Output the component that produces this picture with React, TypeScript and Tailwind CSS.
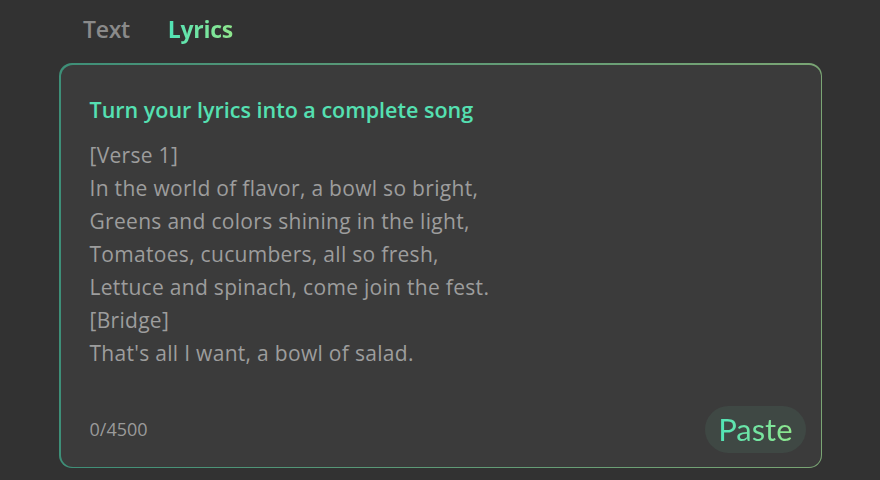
import React from "react";

const lyrics = [
  "[Verse 1]",
  "In the world of flavor, a bowl so bright,",
  "Greens and colors shining in the light,",
  "Tomatoes, cucumbers, all so fresh,",
  "Lettuce and spinach, come join the fest.",
  "[Bridge]",
  "That's all I want, a bowl of salad.",
];

export default function App() {
  return (
    <div
      className="w-[880px] h-[480px] bg-[#323232] overflow-hidden"
      style={{ fontFamily: '"Open Sans", "Noto Sans", sans-serif' }}
    >
      <div className="flex items-center gap-[38px] pl-[83px] pt-[9px] h-[50px]">
        <span className="text-[23px] font-semibold text-[#8a8a8a] tracking-[-0.3px]">Text</span>
        <span className="text-[23px] font-bold tracking-[-0.3px] bg-gradient-to-r from-[#4fe3b6] to-[#8ee68c] bg-clip-text text-transparent">
          Lyrics
        </span>
      </div>
      <div className="ml-[59px] mt-[13px] w-[763px] h-[405px] rounded-[13px] p-[1.5px] bg-gradient-to-r from-[#3e8f78] to-[#7aa574]">
        <div className="w-full h-full rounded-[12px] bg-[#3b3b3b] flex flex-col pl-[29px] pr-[15px]">
          <div className="pt-[30px] text-[21.5px] font-semibold text-[#55e0b2] leading-[30px]">
            Turn your lyrics into a complete song
          </div>
          <div className="mt-[14px] text-[21px] leading-[33px] text-[#9d9d9d] tracking-[0.3px]">
            {lyrics.map((l) => (
              <div key={l}>{l}</div>
            ))}
          </div>
          <div className="mt-auto mb-[14px] flex items-center justify-between">
            <span className="text-[18px] text-[#9a9a9a] pt-[1px]">0/4500</span>
            <button
              className="h-[47px] px-[13px] rounded-full bg-[#3f4844] text-[31px] leading-none"
              style={{ fontFamily: 'Lato, sans-serif' }}
            >
              <span className="bg-gradient-to-r from-[#4fe3b6] to-[#8ee68c] bg-clip-text text-transparent">Paste</span>
            </button>
          </div>
        </div>
      </div>
    </div>
  );
}
